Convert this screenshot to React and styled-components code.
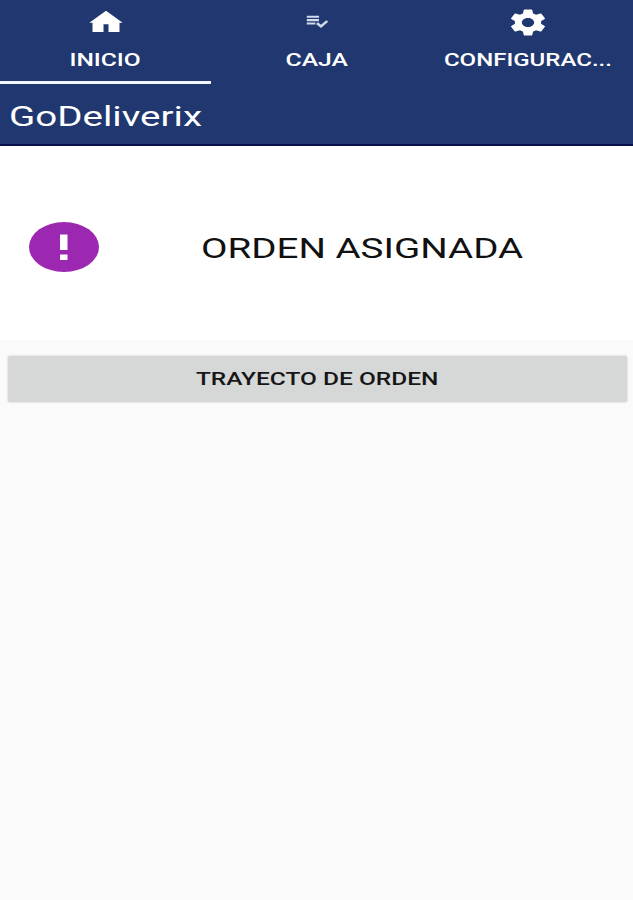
import styled, { createGlobalStyle } from "styled-components"


const tabs = [
    {
        label: 'INICIO', scale: 1.365, width: 40, height: 30, active: true,
        path: 'M12 3 2 12.6h1.9v7.4h6.6v-6.2h3v6.2h6.6v-7.4H22z',
    },
    {
        label: 'CAJA', scale: 1.376, width: 24, height: 20, lift: 1, dim: true,
        path: 'M14 9.7H1.8v2.5H14V9.7zm0-4H1.8v2.5H14V5.7zM1.8 16.2h8.6v-2.5H1.8v2.5zm19.5-5.2L23.2 13l-7.2 7.3-5-4.8L13 13.4l3 3z',
    },
    {
        label: 'CONFIGURAC...', scale: 1.335, width: 42, height: 31,
        path: 'M19.43 12.98c.04-.32.07-.64.07-.98s-.03-.66-.07-.98l2.11-1.65c.19-.15.24-.42.12-.64l-2-3.46c-.12-.22-.39-.3-.61-.22l-2.49 1c-.52-.4-1.08-.73-1.69-.98l-.38-2.65C14.46 2.18 14.25 2 14 2h-4c-.25 0-.46.18-.49.42l-.38 2.65c-.61.25-1.17.59-1.69.98l-2.49-1c-.23-.09-.49 0-.61.22l-2 3.46c-.13.22-.07.49.12.64l2.11 1.65c-.04.32-.07.65-.07.98s.03.66.07.98l-2.11 1.65c-.19.15-.24.42-.12.64l2 3.46c.12.22.39.3.61.22l2.49-1c.52.4 1.08.73 1.69.98l.38 2.65c.03.24.24.42.49.42h4c.25 0 .46-.18.49-.42l.38-2.65c.61-.25 1.17-.59 1.69-.98l2.49 1c.23.09.49 0 .61-.22l2-3.46c.12-.22.07-.49-.12-.64l-2.11-1.65zM12 15.5c-1.93 0-3.5-1.57-3.5-3.5s1.57-3.5 3.5-3.5 3.5 1.57 3.5 3.5-1.57 3.5-3.5 3.5z',
    },
]

export default function App(){

    return(
        <>
            <GlobalStyle />
            <Screen>
                <Header>
                    <TabBar>
                        {tabs.map((tab) => (
                            <Tab key={tab.label} $active={tab.active}>
                                <IconBox $lift={tab.lift}>
                                    <TabIcon
                                        viewBox="0 0 24 24"
                                        preserveAspectRatio="none"
                                        width={tab.width}
                                        height={tab.height}
                                        $dim={tab.dim}
                                    >
                                        <path d={tab.path} />
                                    </TabIcon>
                                </IconBox>
                                <TabLabel $scale={tab.scale}>{tab.label}</TabLabel>
                            </Tab>
                        ))}
                    </TabBar>
                    <TitleBar>
                        <Title $scale={1.376}>GoDeliverix</Title>
                    </TitleBar>
                </Header>
                <OrderCard>
                    <Alert viewBox="0 0 70 50">
                        <ellipse cx="35" cy="25" rx="35" ry="25" />
                        <rect x="31" y="12.5" width="7.5" height="15.5" />
                        <rect x="31" y="32.5" width="7.5" height="5.5" />
                    </Alert>
                    <OrderStatus>
                        <StatusText $scale={1.376}>ORDEN ASIGNADA</StatusText>
                    </OrderStatus>
                </OrderCard>
                <RouteButton type="button">
                    <ButtonLabel $scale={1.36}>TRAYECTO DE ORDEN</ButtonLabel>
                </RouteButton>
            </Screen>
        </>
    )
}

const GlobalStyle = createGlobalStyle`
    *{ box-sizing: border-box; }
    body{
        margin: 0; background: #fafafa;
        font-family: Roboto, "Liberation Sans", sans-serif;
    }
`

const Screen = styled.div`
    width: 100%; min-height: 900px;
    background: #fafafa;
`

const Header = styled.header`
    height: 146px;
    background: #20386f; color: #fff;
    border-bottom: 2px solid #07104a;
`

const TabBar = styled.nav`
    display: grid; grid-template-columns: repeat(3, 1fr);
    height: 84px;
`

const Tab = styled.div`
    display: flex; flex-direction: column; align-items: center;
    border-bottom: 3px solid ${({$active}) => $active ? '#f4f6fc' : 'transparent'};
`

const IconBox = styled.div`
    display: flex; align-items: center; justify-content: center;
    height: 44px;
    padding-bottom: ${({$lift}) => $lift ? $lift * 2 : 0}px;
`

const TabIcon = styled.svg`
    display: block; flex: none;
    fill: ${({$dim}) => $dim ? '#d3dbec' : '#fff'};
`

// wide lettering
const Stretch = styled.span`
    display: block; white-space: nowrap;
    transform: scaleX(${({$scale}) => $scale});
`

const TabLabel = styled(Stretch)`
    font-size: 18px; font-weight: 500; line-height: 32px;
`

const TitleBar = styled.div`
    display: flex; align-items: center;
    height: 60px; padding: 5px 0 0 9px;
`

const Title = styled(Stretch)`
    font-size: 28px; line-height: 34px;
    transform-origin: left center;
`

const OrderCard = styled.section`
    display: flex; align-items: center;
    height: 194px; padding: 8px 0 0 29px;
    background: #fff;
`

const Alert = styled.svg`
    display: block; flex: none;
    width: 70px; height: 50px;
    fill: #9c27b0;

    &>rect{ fill: #fff; }
`

const OrderStatus = styled.div`
    display: flex; flex: 1; justify-content: center;
    padding: 4px 8px 0 0;
`

const StatusText = styled(Stretch)`
    color: #111; font-size: 28px; line-height: 36px;
`

const RouteButton = styled.button`
    display: flex; align-items: center; justify-content: center;
    width: calc(100% - 14px); height: 46px;
    margin: 16px 6px 0 8px; padding: 0;
    border: 0; border-radius: 2px;
    background: #d6d8d7; color: #161616;
    font-family: inherit;
    box-shadow: 0 0 2px rgba(0, 0, 0, 0.28);
`

const ButtonLabel = styled(Stretch)`
    font-size: 18px; font-weight: 500; line-height: 24px;
`
